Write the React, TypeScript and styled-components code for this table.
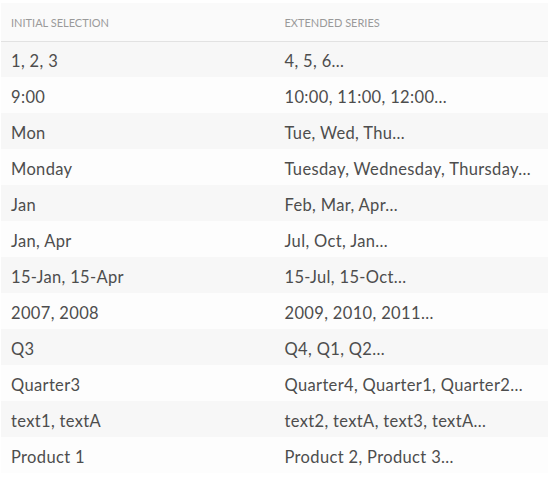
import React from "react";
import styled, { createGlobalStyle } from "styled-components";

const Global = createGlobalStyle`
  html, body { margin: 0; padding: 0; background: #ffffff; }
  body { font-family: Lato, "Open Sans", sans-serif; }
`;

const Wrap = styled.div`
  padding: 3px 6px 0 1px;
`;

const Table = styled.table`
  width: 547px;
  border-collapse: collapse;
  table-layout: fixed;
`;

const HeadCell = styled.th`
  box-sizing: border-box;
  background: #fafafa;
  height: 38px;
  padding: 1px 10px 0;
  text-align: left;
  font-weight: 400;
  font-size: 11px;
  text-transform: uppercase;
  color: #9a9a9a;
  border-bottom: 1px solid #e2e2e2;
  vertical-align: middle;
`;

const Row = styled.tr<{ $odd: boolean }>`
  background: ${(p) => (p.$odd ? "#f7f7f7" : "#fdfdfd")};
`;

const Cell = styled.td`
  height: 36px;
  box-sizing: border-box;
  padding: 3px 10px 0;
  font-size: 16.5px;
  letter-spacing: 0.35px;
  color: #4d4d4d;
  vertical-align: middle;
  white-space: nowrap;
`;

const rows: [string, string][] = [
  ["1, 2, 3", "4, 5, 6…"],
  ["9:00", "10:00, 11:00, 12:00…"],
  ["Mon", "Tue, Wed, Thu…"],
  ["Monday", "Tuesday, Wednesday, Thursday…"],
  ["Jan", "Feb, Mar, Apr…"],
  ["Jan, Apr", "Jul, Oct, Jan…"],
  ["15-Jan, 15-Apr", "15-Jul, 15-Oct…"],
  ["2007, 2008", "2009, 2010, 2011…"],
  ["Q3", "Q4, Q1, Q2…"],
  ["Quarter3", "Quarter4, Quarter1, Quarter2…"],
  ["text1, textA", "text2, textA, text3, textA…"],
  ["Product 1", "Product 2, Product 3…"],
];

export default function App() {
  return (
    <>
      <Global />
      <Wrap>
        <Table>
          <thead>
            <tr>
              <HeadCell>Initial Selection</HeadCell>
              <HeadCell>Extended Series</HeadCell>
            </tr>
          </thead>
          <tbody>
            {rows.map(([a, b], i) => (
              <Row key={i} $odd={i % 2 === 0}>
                <Cell>{a}</Cell>
                <Cell>{b}</Cell>
              </Row>
            ))}
          </tbody>
        </Table>
      </Wrap>
    </>
  );
}
